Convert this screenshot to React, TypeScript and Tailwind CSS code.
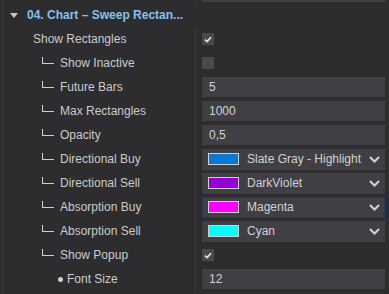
import React from 'react';

type Row =
  | { label: string; kind: 'check'; checked: boolean; level: 0 | 1 | 2 }
  | { label: string; kind: 'text'; value: string; level: 0 | 1 | 2 }
  | { label: string; kind: 'color'; value: string; color: string; level: 0 | 1 | 2; focused?: boolean };

const rows: Row[] = [
  { label: 'Show Rectangles', kind: 'check', checked: true, level: 0 },
  { label: 'Show Inactive', kind: 'check', checked: false, level: 1 },
  { label: 'Future Bars', kind: 'text', value: '5', level: 1 },
  { label: 'Max Rectangles', kind: 'text', value: '1000', level: 1 },
  { label: 'Opacity', kind: 'text', value: '0,5', level: 1 },
  { label: 'Directional Buy', kind: 'color', value: 'Slate Gray - Highlight', color: '#0a78d2', level: 1 },
  { label: 'Directional Sell', kind: 'color', value: 'DarkViolet', color: '#9400d3', level: 1 },
  { label: 'Absorption Buy', kind: 'color', value: 'Magenta', color: '#ff00ff', level: 1, focused: true },
  { label: 'Absorption Sell', kind: 'color', value: 'Cyan', color: '#00ffff', level: 1 },
  { label: 'Show Popup', kind: 'check', checked: true, level: 1 },
  { label: 'Font Size', kind: 'text', value: '12', level: 2 },
];

function Check({ checked }: { checked: boolean }) {
  return (
    <div className="w-[12px] h-[12px] bg-[#48484d] flex items-center justify-center">
      {checked && (
        <svg width="8" height="7" viewBox="0 0 8 7">
          <path d="M1 3.6 L3.1 5.6 L7 1.2" fill="none" stroke="#e6e6e6" strokeWidth="1.7" />
        </svg>
      )}
    </div>
  );
}

function Chevron() {
  return (
    <svg width="11" height="7" viewBox="0 0 11 7">
      <path d="M1 1 L5.5 5.5 L10 1" fill="none" stroke="#d6d6d6" strokeWidth="2" />
    </svg>
  );
}

function Label({ row }: { row: Row }) {
  if (row.level === 0) {
    return <span className="pl-[30px]">{row.label}</span>;
  }
  if (row.level === 2) {
    return (
      <span className="pl-[55px] flex items-center">
        <span className="w-[5px] h-[5px] rounded-full bg-[#d0d0d0] mr-[4px]" />
        {row.label}
      </span>
    );
  }
  return (
    <span className="pl-[39px] flex items-center">
      <span className="w-[12px] h-[7px] border-l border-b border-[#cfcfcf] mr-[6px] -mt-[5px]" />
      {row.label}
    </span>
  );
}

export default function App() {
  return (
    <div
      className="w-[389px] h-[294px] bg-[#2d2d30] overflow-hidden text-[12px] text-[#cbcbcb] pl-[2px]"
      style={{ fontFamily: '"Liberation Sans", Arial, sans-serif' }}
    >
      <div className="border-l border-[#3a3a3e] h-full">
        {/* bottom of previous section */}
        <div className="flex h-[3px]">
          <div className="w-[193px] border-r border-[#3c3c40]" />
          <div className="flex-1 pl-[6px] pr-[4px]">
            <div className="h-[2px] bg-[#3e3e43]" />
          </div>
        </div>

        <div className="flex items-center h-[24px]">
          <svg className="ml-[7px]" width="8" height="5" viewBox="0 0 8 5">
            <path d="M0 0 L8 0 L4 5 Z" fill="#c8c8c8" />
          </svg>
          <span className="ml-[9px] font-bold text-[#86c1ec] whitespace-nowrap">04. Chart – Sweep Rectan...</span>
        </div>

        {rows.map((row) => (
          <div key={row.label} className="flex h-[24px]">
            <div className="w-[193px] border-r border-[#3c3c40] flex items-center whitespace-nowrap">
              <Label row={row} />
            </div>
            <div className="flex-1 pl-[6px] pr-[4px] flex items-center">
              {row.kind === 'check' && <Check checked={row.checked} />}
              {row.kind === 'text' && (
                <div className="w-full h-[20px] bg-[#3f3f44] flex items-center pl-[7px] text-[#d2d2d2]">
                  {row.value}
                </div>
              )}
              {row.kind === 'color' && (
                <div
                  className={`w-full h-[21px] bg-[#3f3f44] flex items-center pl-[5px] pr-[4px] border ${
                    row.focused ? 'border-[#1f3c64]' : 'border-[#3f3f44]'
                  }`}
                >
                  <span
                    className="w-[31px] h-[12px] border border-[#d0d0d0] shrink-0"
                    style={{ backgroundColor: row.color }}
                  />
                  <span className="ml-[8px] flex-1 text-[#d2d2d2] whitespace-nowrap">{row.value}</span>
                  <Chevron />
                </div>
              )}
            </div>
          </div>
        ))}
      </div>
    </div>
  );
}
